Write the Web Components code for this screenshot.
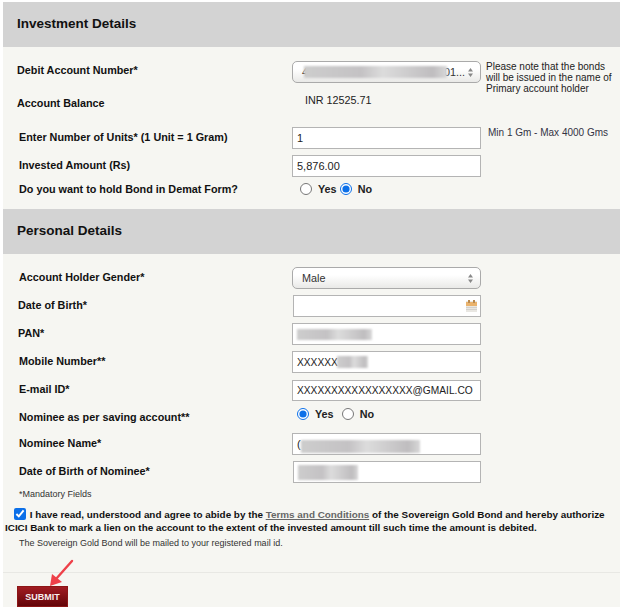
<!DOCTYPE html>
<html>
<head>
<meta charset="utf-8">
<style>
  html, body { margin: 0; padding: 0; background: #fff; }
  body { font-family: "Liberation Sans", Arial, sans-serif; color: #111; overflow: hidden; height: 607px; }
</style>
</head>
<body>
<bond-form>
  <section-head>Investment Details</section-head>
  <form-row label="Debit Account Number*" h="28" top="14" lx="14" ly="-2">
    <fake-select>4<smudge-box x="11" w="143" h="12" y="4"></smudge-box><span style="margin-left:auto">01...</span></fake-select>
    <span slot="note" class="note">Please note that the bonds<br>will be issued in the name of<br>Primary account holder</span>
  </form-row>
  <form-row label="Account Balance" h="38" lx="14" ly="3">
    <span style="margin:5px 0 0 13px;line-height:13px">INR 12525.71</span>
  </form-row>
  <form-row label="Enter Number of Units* (1 Unit = 1 Gram)" h="28" lx="16" ly="-1">
    <text-box>1</text-box>
    <span slot="note" class="note tight">Min 1 Gm - Max 4000 Gms</span>
  </form-row>
  <form-row label="Invested Amount (Rs)" h="28" lx="16" ly="-1"><text-box>5,876.00</text-box></form-row>
  <form-row label="Do you want to hold Bond in Demat Form?" h="26" lx="16" ly="-5">
    <radio-pair no style="margin:-5px 0 0 8px"></radio-pair>
  </form-row>

  <section-head>Personal Details</section-head>
  <form-row label="Account Holder Gender*" h="28" top="13" lx="16" ly="-1"><fake-select>Male</fake-select></form-row>
  <form-row label="Date of Birth*" h="28" lx="15" cx="1" ly="-1"><text-box>
    <svg width="11" height="12" viewBox="0 0 11 12" style="margin-left:auto;margin-right:-1px">
      <rect y="1" width="11" height="11" fill="#e9e7e2"/>
      <rect y="2" width="11" height="4" fill="#eab36d"/>
      <rect x="2" y="0" width="2" height="3" fill="#b98a50"/>
      <rect x="7" y="0" width="2" height="3" fill="#b98a50"/>
      <rect y="7" width="11" height="1" fill="#d3d1cc"/>
      <rect y="9" width="11" height="1" fill="#d3d1cc"/>
    </svg>
  </text-box></form-row>
  <form-row label="PAN*" h="28" lx="15" ly="-1"><text-box><smudge-box x="4" w="75" h="11" y="5"></smudge-box></text-box></form-row>
  <form-row label="Mobile Number**" h="29" lx="16" ly="-1"><text-box style="font-size:10.2px">XXXXXX<smudge-box x="44" w="31" h="12" y="4"></smudge-box></text-box></form-row>
  <form-row label="E-mail ID*" h="22" lx="16" ly="-2"><text-box style="height:21px;font-size:10.2px">XXXXXXXXXXXXXXXXX@GMAIL.CO</text-box></form-row>
  <form-row label="Nominee as per saving account**" h="31" lx="16" ly="4">
    <radio-pair style="margin:1px 0 0 5px;--gap2:5px"></radio-pair>
  </form-row>
  <form-row label="Nominee Name*" h="28" lx="16" ly="-1"><text-box>(<smudge-box x="8" w="119" h="13" y="6"></smudge-box></text-box></form-row>
  <form-row label="Date of Birth of Nominee*" h="27" lx="16" cx="1" ly="-1"><text-box><smudge-box x="4" w="60" h="15" y="3"></smudge-box></text-box></form-row>
  <bond-terms></bond-terms>
</bond-form>

<script>
// page shell
class BondForm extends HTMLElement {
  constructor() {
    super();
    this.attachShadow({ mode: 'open' }).innerHTML = `
      <style>
        :host { display: block; position: relative; margin: 2px 0 0 3px; height: 605px; background: #f6f6f2; overflow: hidden; }
        svg { position: absolute; left: 45px; top: 556px; }
      </style>
      <slot></slot>
      <svg width="32" height="34" viewBox="0 0 32 34">
        <path d="M24 3 L8 21" stroke="#ee4049" stroke-width="2.4" stroke-linecap="round" fill="none"/>
        <path d="M2 28 L4 16 L14 24 Z" fill="#ee4049"/>
      </svg>`;
  }
}

class SectionHead extends HTMLElement {
  constructor() {
    super();
    this.attachShadow({ mode: 'open' }).innerHTML = `
      <style>
        :host { display: flex; align-items: center; height: 45px; padding-left: 14px; background: #d3d3d3; font: bold 13.5px/16px "Liberation Sans", Arial, sans-serif; color: #111; }
        span { position: relative; top: -1px; }
      </style>
      <span><slot></slot></span>`;
  }
}

// label + control column + note column
class FormRow extends HTMLElement {
  constructor() {
    super();
    this.attachShadow({ mode: 'open' }).innerHTML = `
      <style>
        :host { display: grid; grid-template-columns: 289px 189px 1fr; box-sizing: border-box; font: 10.8px "Liberation Sans", Arial, sans-serif; color: #222; }
        .lbl { font-weight: bold; font-size: 10.8px; line-height: 22px; color: #111; white-space: nowrap; }
        .ctl { display: flex; align-items: flex-start; }
        .nt { padding-left: 5px; }
        ::slotted(.note) { display: block; font-size: 10px; line-height: 11px; color: #222; margin-top: 0; white-space: nowrap; }
        ::slotted(.note.tight) { margin: 0 0 0 2px; color: #334; }
      </style>
      <div class="lbl"></div>
      <div class="ctl"><slot></slot></div>
      <div class="nt"><slot name="note"></slot></div>`;
  }
  connectedCallback() {
    const lbl = this.shadowRoot.querySelector('.lbl');
    const ctl = this.shadowRoot.querySelector('.ctl');
    lbl.textContent = this.getAttribute('label');
    lbl.style.paddingLeft = (this.getAttribute('lx') || 0) + 'px';
    lbl.style.marginTop = (this.getAttribute('ly') || 0) + 'px';
    ctl.style.marginLeft = (this.getAttribute('cx') || 0) + 'px';
    this.style.height = this.getAttribute('h') + 'px';
    this.style.marginTop = (this.getAttribute('top') || 0) + 'px';
  }
}

class TextBox extends HTMLElement {
  constructor() {
    super();
    this.attachShadow({ mode: 'open' }).innerHTML = `
      <style>
        :host { display: flex; align-items: center; position: relative; box-sizing: border-box; width: 189px; height: 22px; padding: 0 4px; background: #fff; border: 1px solid #b4b4b4; font: 11px "Liberation Sans", Arial, sans-serif; color: #222; white-space: nowrap; overflow: hidden; }
      </style>
      <slot></slot>`;
  }
}

class FakeSelect extends HTMLElement {
  constructor() {
    super();
    this.attachShadow({ mode: 'open' }).innerHTML = `
      <style>
        :host { display: flex; align-items: center; position: relative; box-sizing: border-box; width: 189px; height: 22px; padding: 0 15px 0 9px; border: 1px solid #aaa; border-radius: 5px; background: linear-gradient(#fff 35%, #e9e9e7); font: 10.8px "Liberation Sans", Arial, sans-serif; color: #333; white-space: nowrap; }
        svg { position: absolute; right: 7px; top: 6px; }
      </style>
      <slot></slot>
      <svg width="5" height="9" viewBox="0 0 5 9"><path d="M2.5 0 L5 3.5 L0 3.5 Z M0 5.5 L5 5.5 L2.5 9 Z" fill="#888"/></svg>`;
  }
}

// blurred-out account data
class SmudgeBox extends HTMLElement {
  constructor() {
    super();
    this.attachShadow({ mode: 'open' }).innerHTML = `
      <style>
        :host { position: absolute; display: block; background: linear-gradient(90deg, #cdcdcd, #c4c2c4 40%, #dcdcdc 55%, #bfbdbf 90%, #d8d8d8); filter: blur(1px); }
      </style>`;
  }
  connectedCallback() {
    this.style.left = this.getAttribute('x') + 'px';
    this.style.top = this.getAttribute('y') + 'px';
    this.style.width = this.getAttribute('w') + 'px';
    this.style.height = this.getAttribute('h') + 'px';
  }
}

class RadioPair extends HTMLElement {
  constructor() {
    super();
    this.attachShadow({ mode: 'open' }).innerHTML = `
      <style>
        :host { display: flex; align-items: center; height: 22px; font: bold 10.8px "Liberation Sans", Arial, sans-serif; color: #222; gap: 3px; }
        input { margin: 0 3px 0 0; width: 12px; height: 12px; accent-color: #0b6fe8; }
        .n { margin-left: var(--gap2, 0); }
      </style>
      <input type="radio" name="r" class="y"><span>Yes</span>
      <input type="radio" name="r" class="n"><span>No</span>`;
  }
  connectedCallback() {
    const pick = this.hasAttribute('no') ? '.n' : '.y';
    this.shadowRoot.querySelector(pick).checked = true;
  }
}

class BondTerms extends HTMLElement {
  constructor() {
    super();
    this.attachShadow({ mode: 'open' }).innerHTML = `
      <style>
        :host { display: block; font: 11px "Liberation Sans", Arial, sans-serif; color: #222; }
        .small { font-size: 9px; line-height: 12px; padding-left: 16px; color: #333; white-space: nowrap; }
        .agree { margin-top: 8px; padding-left: 2px; font-weight: bold; font-size: 9.9px; line-height: 13px; color: #111; white-space: nowrap; }
        input { width: 12px; height: 12px; margin: 0 1px 0 9px; vertical-align: -2px; accent-color: #0b6fe8; }
        a { color: #666; text-decoration: underline; }
        .mail { margin-top: 3px; }
        .foot { margin-top: 23px; border-top: 1px solid #e8e8e4; padding: 13px 0 0 14px; }
        button { display: block; width: 51px; height: 21px; padding: 0; border: 1px solid #8c1616; background: linear-gradient(#a11c22, #640508); color: #f8eeee; font: bold 9px "Liberation Sans", Arial, sans-serif; }
      </style>
      <div class="small">*Mandatory Fields</div>
      <div class="agree"><input type="checkbox" checked> I have read, understood and agree to abide by the <a href="#">Terms and Conditions</a> of the Sovereign Gold Bond and hereby authorize<br>ICICI Bank to mark a lien on the account to the extent of the invested amount till such time the amount is debited.</div>
      <div class="small mail">The Sovereign Gold Bond will be mailed to your registered mail id.</div>
      <div class="foot"><button type="button">SUBMIT</button></div>`;
  }
}

customElements.define('bond-form', BondForm);
customElements.define('section-head', SectionHead);
customElements.define('form-row', FormRow);
customElements.define('text-box', TextBox);
customElements.define('fake-select', FakeSelect);
customElements.define('smudge-box', SmudgeBox);
customElements.define('radio-pair', RadioPair);
customElements.define('bond-terms', BondTerms);
</script>
</body>
</html>
